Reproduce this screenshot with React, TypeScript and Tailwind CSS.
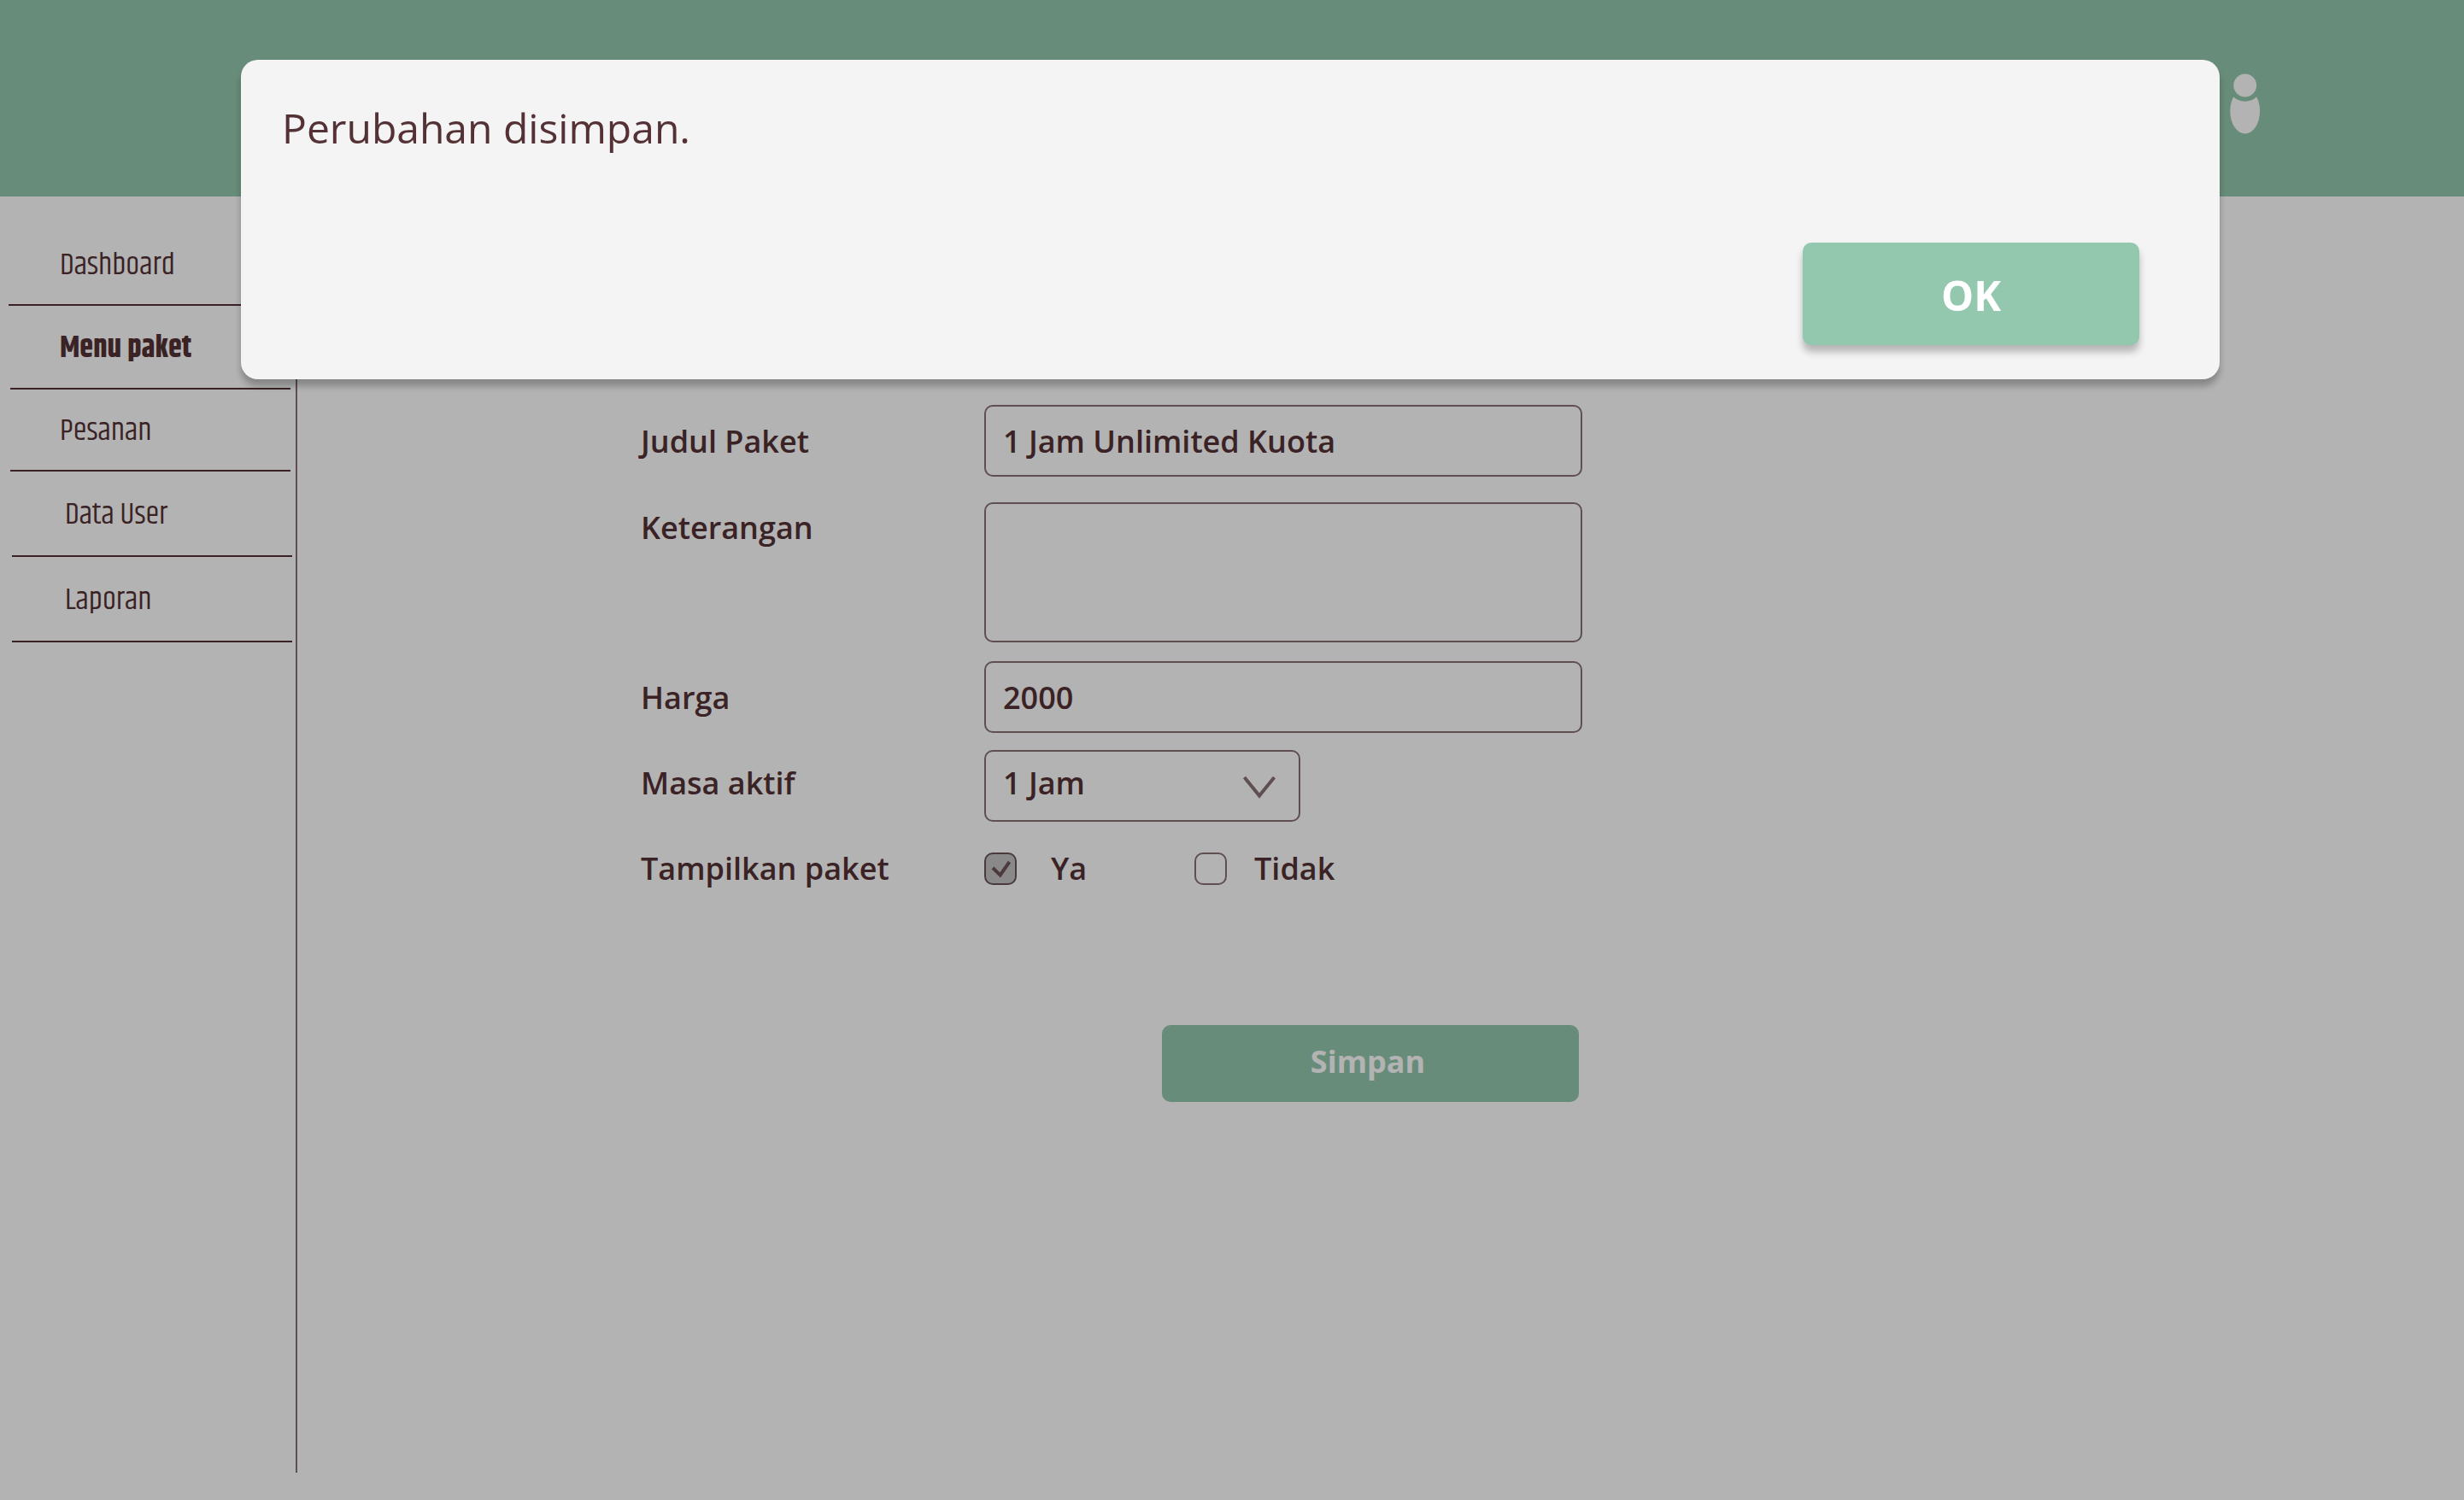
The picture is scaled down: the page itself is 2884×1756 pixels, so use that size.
import React from "react";

const navItems = [
  { label: "Dashboard", box: "ml-[10px] h-24", link: "pl-[60px]" },
  { label: "Menu paket", box: "ml-3 h-[98px]", link: "pl-[58px] font-bold", current: true },
  { label: "Pesanan", box: "ml-3 h-24", link: "pl-[58px]" },
  { label: "Data User", box: "ml-[14px] h-[100px]", link: "pl-[62px]" },
  { label: "Laporan", box: "ml-[14px] h-[100px]", link: "pl-[62px]" },
];

const fieldBox =
  "w-full rounded-[10px] border-2 border-[#887174] bg-transparent px-5 text-[36px] font-semibold text-[#533135] outline-none";

const fieldLabel = "w-[402px] shrink-0 pt-[2px]";

function UserIcon() {
  return (
    <svg width="36" height="72" viewBox="0 0 36 72" aria-hidden="true">
      <ellipse cx="17.7" cy="44" rx="17.4" ry="26.6" fill="#ffffff" />
      <circle cx="17.7" cy="13.6" r="19.2" fill="#94c8ae" />
      <circle cx="17.7" cy="14" r="13.4" fill="#ffffff" />
    </svg>
  );
}

function Header() {
  return (
    <header className="flex h-[230px] items-start justify-end bg-[#94c8ae] pt-[86px] pr-[238px]">
      <button type="button" aria-label="Akun">
        <UserIcon />
      </button>
    </header>
  );
}

function Sidebar() {
  return (
    <nav className="mb-8 w-[348px] shrink-0 border-r-2 border-[#887174] pt-8">
      <ul>
        {navItems.map((item) => (
          <li key={item.label} className={`w-[328px] border-b-2 border-[#533135] ${item.box}`}>
            <a
              href="#"
              aria-current={item.current ? "page" : undefined}
              className={`flex h-full items-center pt-[3px] font-['Khand','Roboto_Condensed','Open_Sans_Condensed','Liberation_Sans_Narrow','Roboto',sans-serif] text-[36px] ${item.link}`}
            >
              {item.label}
            </a>
          </li>
        ))}
      </ul>
    </nav>
  );
}

function PackageForm() {
  return (
    <form className="w-[1102px] text-[36px] leading-[56px] font-semibold">
      <div className="flex items-center">
        <label htmlFor="judul" className={fieldLabel}>Judul Paket</label>
        <input id="judul" type="text" defaultValue="1 Jam Unlimited Kuota" className={`h-[84px] ${fieldBox}`} />
      </div>
      <div className="mt-[30px] flex items-start">
        <label htmlFor="keterangan" className={fieldLabel}>Keterangan</label>
        <textarea id="keterangan" className={`h-[164px] resize-none py-3 ${fieldBox}`} />
      </div>
      <div className="mt-[22px] flex items-center">
        <label htmlFor="harga" className={fieldLabel}>Harga</label>
        <input id="harga" type="text" defaultValue="2000" className={`h-[84px] ${fieldBox}`} />
      </div>
      <div className="mt-5 flex items-center">
        <label htmlFor="masa" className={`pb-2 ${fieldLabel}`}>Masa aktif</label>
        <div className="relative w-[370px]">
          <select id="masa" className={`block h-[84px] appearance-none pb-[6px] ${fieldBox}`}>
            <option>1 Jam</option>
          </select>
          <svg
            className="pointer-events-none absolute top-[30px] right-7"
            width="40"
            height="28"
            viewBox="0 0 40 28"
            fill="none"
            stroke="#887174"
            strokeWidth="4"
            aria-hidden="true"
          >
            <path d="M2.5 2 L20 23.5 L37.5 2" />
          </svg>
        </div>
      </div>
      <fieldset className="mt-9 flex h-[38px] items-center">
        <legend className="float-left w-[402px] shrink-0">Tampilkan paket</legend>
        <div className="flex w-[246px] items-center gap-10">
          <span className="relative flex">
            <input
              id="ya"
              type="checkbox"
              defaultChecked
              className="size-[38px] appearance-none rounded-[10px] border-2 border-[#6b5356] bg-[#c3c3c3]"
            />
            <svg
              className="pointer-events-none absolute inset-0"
              width="38"
              height="38"
              viewBox="0 0 38 38"
              fill="none"
              stroke="#6b5356"
              strokeWidth="4"
              aria-hidden="true"
            >
              <path d="M10 18 L18.7 26.5 L29.5 11" />
            </svg>
          </span>
          <label htmlFor="ya">Ya</label>
        </div>
        <div className="flex items-center gap-8">
          <input
            id="tidak"
            type="checkbox"
            className="size-[38px] appearance-none rounded-[10px] border-2 border-[#887174]"
          />
          <label htmlFor="tidak">Tidak</label>
        </div>
      </fieldset>
      <div className="mt-[164px] flex justify-end pr-1">
        <button type="button" className="h-[90px] w-[488px] rounded-[10px] bg-[#94c8ae] pr-[6px] pb-1 font-bold text-white">
          Simpan
        </button>
      </div>
    </form>
  );
}

function SavedDialog() {
  return (
    <div className="fixed inset-0 bg-[#0000004c] pt-[70px] pr-[286px] pl-[282px]">
      <div
        role="dialog"
        aria-modal="true"
        aria-labelledby="pesan"
        className="flex flex-col rounded-[20px] bg-[#f4f4f4] pt-[47px] pr-[94px] pb-10 pl-12 shadow-[0_8px_8px_rgba(0,0,0,0.26)]"
      >
        <p id="pesan" className="text-[48px] leading-[66px]">Perubahan disimpan.</p>
        <button
          type="button"
          className="mt-[101px] h-[120px] w-[394px] self-end rounded-[10px] bg-[#94c8ae] pt-[3px] text-[48px] font-bold text-white shadow-[0_8px_8px_rgba(0,0,0,0.26)]"
        >
          OK
        </button>
      </div>
    </div>
  );
}

export default function App() {
  return (
    <div className="flex min-h-screen flex-col bg-white font-['Open_Sans',sans-serif] text-[#533135]">
      <Header />
      <div className="flex flex-1">
        <Sidebar />
        <main className="flex-1 pt-[244px] pl-[402px]">
          <PackageForm />
        </main>
      </div>
      <SavedDialog />
    </div>
  );
}
